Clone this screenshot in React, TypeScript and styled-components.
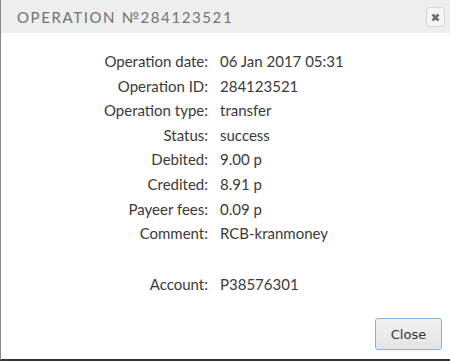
import React from "react";
import styled, { createGlobalStyle } from "styled-components";

const GlobalStyle = createGlobalStyle`
  html, body {
    margin: 0;
    padding: 0;
    background: #fff;
  }
`;

const Dialog = styled.div`
  width: 450px;
  height: 361px;
  box-sizing: border-box;
  border-left: 1px solid #8a8a8a;
  border-bottom: 2px solid #2f3436;
  display: flex;
  flex-direction: column;
  background: #fff;
  font-family: Lato, "Open Sans", sans-serif;
`;

const Header = styled.div`
  height: 33px;
  flex-shrink: 0;
  background: #eeeeee;
  display: flex;
  align-items: center;
  justify-content: space-between;
  padding: 0 5px 0 16px;
`;

const Title = styled.div`
  font-family: Lato, sans-serif;
  font-size: 15px;
  letter-spacing: 1.6px;
  color: #737373;
  font-weight: 400;
`;

const CloseX = styled.button`
  width: 19px;
  height: 20px;
  padding: 0;
  border: 1px solid #d6d6d6;
  border-radius: 3px;
  background: #f4f4f4;
  display: flex;
  align-items: center;
  justify-content: center;
  margin-top: 1px;
`;

const Body = styled.div`
  flex: 1;
  padding-top: 16px;
`;

const Grid = styled.div`
  display: grid;
  grid-template-columns: 207px auto;
  column-gap: 12px;
  font-size: 15px;
  line-height: 24.6px;
  color: #3a3a3a;
`;

const Label = styled.div`
  text-align: right;
`;

const Value = styled.div``;

const Spacer = styled.div<{ h: number }>`
  grid-column: 1 / span 2;
  height: ${(p) => p.h}px;
`;

const Footer = styled.div`
  display: flex;
  justify-content: flex-end;
  padding: 0 8px 9px 0;
`;

const Button = styled.button`
  width: 67px;
  height: 32px;
  box-sizing: border-box;
  border: 1px solid #7eb4ea;
  border-radius: 3px;
  background: linear-gradient(#f2f2f2, #e3e3e3);
  font-family: "DejaVu Sans", Verdana, sans-serif;
  font-size: 13px;
  color: #333;
  padding: 0;
`;

const rows: [string, string][] = [
  ["Operation date:", "06 Jan 2017 05:31"],
  ["Operation ID:", "284123521"],
  ["Operation type:", "transfer"],
  ["Status:", "success"],
  ["Debited:", "9.00 p"],
  ["Credited:", "8.91 p"],
  ["Payeer fees:", "0.09 p"],
  ["Comment:", "RCB-kranmoney"],
];

export default function App() {
  return (
    <>
      <GlobalStyle />
      <Dialog>
        <Header>
          <Title>OPERATION №284123521</Title>
          <CloseX>
            <svg width="9" height="9" viewBox="0 0 9 9">
              <path d="M1.5 1.5 L7.5 7.5 M7.5 1.5 L1.5 7.5" stroke="#6e6e6e" strokeWidth="2.6" />
            </svg>
          </CloseX>
        </Header>
        <Body>
          <Grid>
            {rows.map(([l, v]) => (
              <React.Fragment key={l}>
                <Label>{l}</Label>
                <Value>{v}</Value>
              </React.Fragment>
            ))}
            <Spacer h={26} />
            <Label>Account:</Label>
            <Value>P38576301</Value>
          </Grid>
        </Body>
        <Footer>
          <Button>Close</Button>
        </Footer>
      </Dialog>
    </>
  );
}
